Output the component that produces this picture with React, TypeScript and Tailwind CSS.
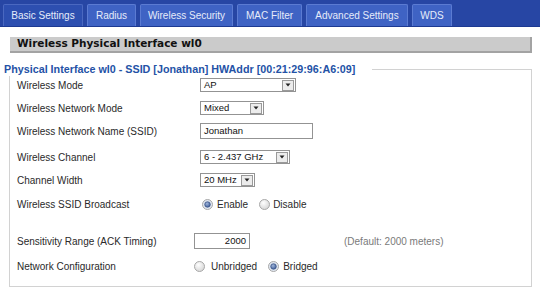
import React from "react";

const tabs = [
  { label: "Basic Settings", w: "w-[80px]", active: true },
  { label: "Radius", w: "w-[49px]" },
  { label: "Wireless Security", w: "w-[93px]" },
  { label: "MAC Filter", w: "w-[65px]" },
  { label: "Advanced Settings", w: "w-[102px]" },
  { label: "WDS", w: "w-[40px]" },
];

function Arrow() {
  return (
    <span className="ml-auto mr-[1px] flex h-[11px] w-[12px] items-center justify-center border border-[#9a9a9a] bg-[#ececec]">
      <svg width="6" height="4" viewBox="0 0 6 4">
        <path d="M0.5 0.5 L5.5 0.5 L3 3.5 Z" fill="#222" />
      </svg>
    </span>
  );
}

function Select({ value, w }: { value: string; w: string }) {
  return (
    <div className={`flex h-[14px] items-center border border-[#939393] bg-white pl-[3px] text-[9.5px] leading-none text-[#111] ${w}`}>
      <span>{value}</span>
      <Arrow />
    </div>
  );
}

function Radio({ checked }: { checked?: boolean }) {
  return (
    <svg width="11" height="11" viewBox="0 0 11 11">
      <defs>
        <radialGradient id="rg" cx="0.4" cy="0.35" r="0.7">
          <stop offset="0" stopColor="#ffffff" />
          <stop offset="1" stopColor="#d4d4d4" />
        </radialGradient>
        <radialGradient id="rb" cx="0.4" cy="0.35" r="0.7">
          <stop offset="0" stopColor="#9fb4d8" />
          <stop offset="1" stopColor="#3b5b98" />
        </radialGradient>
      </defs>
      <circle cx="5.5" cy="5.5" r="5" fill={checked ? "#dfe6f0" : "url(#rg)"} stroke="#a8a8a8" strokeWidth="1" />
      {checked && <circle cx="5.5" cy="5.5" r="2.8" fill="url(#rb)" stroke="#2a4377" strokeWidth="0.6" />}
    </svg>
  );
}

function Row({ label, mt, lw, children }: { label: string; mt: string; lw: string; children: React.ReactNode }) {
  return (
    <div className={`flex h-[22px] items-center ${mt}`}>
      <div className={`${lw} shrink-0 text-[10px] text-[#2a2a2a]`}>{label}</div>
      {children}
    </div>
  );
}

export default function App() {
  return (
    <div className="h-[293px] w-[540px] overflow-hidden bg-white font-['Liberation_Sans',Arial,sans-serif]">
      <div className="flex h-[27px] items-end gap-[4px] border-b border-[#1d3a92] bg-[#2746a4] pl-[3px]">
        {tabs.map((t) => (
          <div
            key={t.label}
            className={`flex h-[22px] items-center justify-center rounded-t-[2px] border border-b-0 text-[10px] text-[#e6ecfa] ${t.w} ${
              t.active ? "border-[#4a68c0] bg-[#2d4fb0]" : "border-[#5b7bd2] bg-[#3f63c4]"
            }`}
          >
            {t.label}
          </div>
        ))}
      </div>

      <div className="ml-[10px] mr-[8px] mt-[10px] flex h-[16px] items-center border-b-2 border-r-2 border-[#a3a3a3] bg-[#cbcbcb] pl-[7px] font-['DejaVu_Sans',Verdana,sans-serif] text-[10.5px] font-bold text-[#111]">
        Wireless Physical Interface wl0
      </div>

      <div className="relative ml-[9px] mr-[8px] mt-[16px] h-[218px] border border-[#d2d2d2] pl-[7px] pt-[1px]">
        <span className="absolute -left-[6px] -top-[8px] bg-white pr-[17px] text-[10.75px] font-bold leading-[14px] text-[#2452a6]">
          Physical Interface wl0 - SSID [Jonathan] HWAddr [00:21:29:96:A6:09]
        </span>

        <Row label="Wireless Mode" mt="mt-[3px]" lw="w-[183px]">
          <Select value="AP" w="w-[96px]" />
        </Row>
        <Row label="Wireless Network Mode" mt="mt-[1px]" lw="w-[183px]">
          <Select value="Mixed" w="w-[64px]" />
        </Row>
        <Row label="Wireless Network Name (SSID)" mt="mt-[1px]" lw="w-[183px]">
          <div className="flex h-[16px] w-[113px] items-center border border-[#939393] bg-white pl-[3px] text-[9.5px] text-[#111]">
            Jonathan
          </div>
        </Row>
        <Row label="Wireless Channel" mt="mt-[4px]" lw="w-[183px]">
          <Select value="6 - 2.437 GHz" w="w-[90px]" />
        </Row>
        <Row label="Channel Width" mt="mt-[1px]" lw="w-[183px]">
          <Select value="20 MHz" w="w-[55px]" />
        </Row>
        <Row label="Wireless SSID Broadcast" mt="mt-[2px]" lw="w-[185px]">
          <div className="flex items-center text-[10px] text-[#2a2a2a]">
            <Radio checked />
            <span className="ml-[4px]">Enable</span>
            <span className="ml-[11px] flex"><Radio /></span>
            <span className="ml-[3px]">Disable</span>
          </div>
        </Row>
        <Row label="Sensitivity Range (ACK Timing)" mt="mt-[15px]" lw="w-[177px]">
          <div className="flex h-[16px] w-[56px] items-center justify-end border border-[#939393] bg-white pr-[3px] text-[9.5px] text-[#111]">
            2000
          </div>
          <span className="ml-[94px] text-[10px] text-[#7a7a7a]">(Default: 2000 meters)</span>
        </Row>
        <Row label="Network Configuration" mt="mt-[3px]" lw="w-[177px]">
          <div className="flex items-center text-[10px] text-[#2a2a2a]">
            <Radio />
            <span className="ml-[6px]">Unbridged</span>
            <span className="ml-[11px] flex"><Radio checked /></span>
            <span className="ml-[4px]">Bridged</span>
          </div>
        </Row>
      </div>
    </div>
  );
}
